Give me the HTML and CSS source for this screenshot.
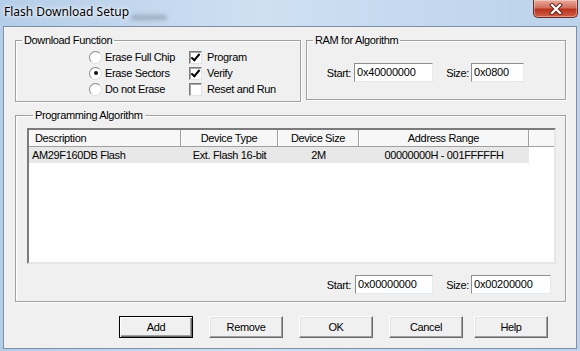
FILE: index.html
```html
<!DOCTYPE html>
<html lang="en">
<head>
  <meta charset="UTF-8">
  <title>Flash Download Setup</title>
  <link rel="stylesheet" href="styles.css">
</head>
<body>

  <div class="window">
    <!-- Title bar -->
    <div class="titlebar">
      <span class="title">Flash Download Setup</span>
      <span class="glass-smudge"></span>
      <button class="close" title="Close">
        <svg width="16" height="12" viewBox="0 0 16 12">
          <path d="M4 2 L12 10 M12 2 L4 10" stroke="#5a1f18" stroke-width="4" stroke-linecap="square"/>
          <path d="M4 2 L12 10 M12 2 L4 10" stroke="#ffffff" stroke-width="2.2" stroke-linecap="square"/>
        </svg>
      </button>
    </div>

    <div class="client">
      <div class="top-row">
        <fieldset class="group group-func">
          <legend>Download Function</legend>
          <div class="func-grid">
            <label class="opt"><span class="radio"></span>Erase Full Chip</label>
            <label class="opt"><span class="check on"></span>Program</label>
            <label class="opt"><span class="radio on"></span>Erase Sectors</label>
            <label class="opt"><span class="check on"></span>Verify</label>
            <label class="opt"><span class="radio"></span>Do not Erase</label>
            <label class="opt"><span class="check"></span>Reset and Run</label>
          </div>
        </fieldset>

        <fieldset class="group group-ram">
          <legend>RAM for Algorithm</legend>
          <div class="field-row">
            <span class="lbl lbl-start">Start:</span>
            <span class="textbox tb-ram-start">0x40000000</span>
            <span class="lbl lbl-size">Size:</span>
            <span class="textbox tb-ram-size">0x0800</span>
          </div>
        </fieldset>
      </div>

      <fieldset class="group group-algo">
        <legend>Programming Algorithm</legend>
        <div class="list">
          <div class="list-head">
            <div class="cell col-desc">Description</div>
            <div class="cell col-type">Device Type</div>
            <div class="cell col-size">Device Size</div>
            <div class="cell col-addr">Address Range</div>
            <div class="cell col-rest"></div>
          </div>
          <div class="list-row selected">
            <div class="cell col-desc">AM29F160DB Flash</div>
            <div class="cell col-type">Ext. Flash 16-bit</div>
            <div class="cell col-size">2M</div>
            <div class="cell col-addr">00000000H - 001FFFFFH</div>
          </div>
        </div>
        <div class="field-row addr-row">
          <span class="lbl lbl-start2">Start:</span>
          <span class="textbox tb-algo-start">0x00000000</span>
          <span class="lbl lbl-size2">Size:</span>
          <span class="textbox tb-algo-size">0x00200000</span>
        </div>
      </fieldset>

      <div class="buttons">
        <button class="btn default">Add</button>
        <button class="btn">Remove</button>
        <button class="btn">OK</button>
        <button class="btn">Cancel</button>
        <button class="btn btn-help">Help</button>
      </div>
    </div>
  </div>

</body>
</html>
```

FILE: styles.css
```css
* {
  box-sizing: border-box;
}

body {
  margin: 0;
  font-family: 'Liberation Sans', Arial, sans-serif;
  font-size: 11px;
  letter-spacing: -0.35px;
  color: #000;
}

.window {
  width: 580px;
  height: 351px;
  display: flex;
  flex-direction: column;
  padding: 0 3px 2px 3px;
  background: linear-gradient(to right, #b4cde8, #cfe0f2 45%, #c3d8ee 75%, #bcd3eb);
}

/* Title bar */
.titlebar {
  height: 26px;
  margin: 0 -3px;
  padding-left: 4px;
  display: flex;
  align-items: flex-start;
}

.title {
  font-family: 'Noto Sans', 'Open Sans', sans-serif;
  font-size: 12px;
  letter-spacing: 0;
  line-height: 16px;
  padding-top: 4px;
  color: #000;
  text-shadow: 0 0 6px #fff, 0 0 3px #fff;
}

.glass-smudge {
  width: 36px;
  height: 5px;
  margin: 15px 0 0 2px;
  background: #8b9aab;
  border-radius: 3px;
  filter: blur(2px);
  opacity: 0.7;
}

.close {
  margin-left: auto;
  margin-right: 2px;
  width: 45px;
  height: 18px;
  padding: 0;
  border: 1px solid #6e2b22;
  border-top: none;
  border-radius: 0 0 5px 5px;
  background: linear-gradient(to bottom, #e9a99b, #d2705e 45%, #b8321c 55%, #d0604a);
  box-shadow: inset 0 0 0 1px rgba(255, 255, 255, 0.35);
  display: flex;
  justify-content: center;
  align-items: center;
}

/* Client area */
.client {
  flex: 1;
  background: #f0f0f0;
  border: 1px solid #7d90a6;
  padding: 7px 10px 0 11px;
}

.top-row {
  display: flex;
  align-items: flex-start;
  gap: 5px;
}

.group {
  margin: 0;
  padding: 0;
  min-width: 0;
  border: 1px solid #a0a0a0;
  box-shadow: inset 1px 1px 0 #fff, 1px 1px 0 #fff;
}

.group legend {
  margin-left: 6px;
  padding: 0 2px;
  line-height: 13px;
}

.group-func {
  width: 286px;
  height: 68px;
}

.group-ram {
  width: 260px;
  height: 66px;
}

.func-grid {
  margin: 2px 0 0 73px;
  display: grid;
  grid-template-columns: 100px auto;
}

.opt {
  height: 16px;
  display: flex;
  align-items: center;
}

.radio {
  width: 13px;
  height: 13px;
  margin-right: 3px;
  border-radius: 50%;
  border: 1px solid;
  border-color: #8a8a8a #dedede #dedede #8a8a8a;
  background: #fff;
  display: flex;
  justify-content: center;
  align-items: center;
}

.radio.on::after {
  content: "";
  width: 4px;
  height: 4px;
  border-radius: 50%;
  background: #111;
}

.check {
  width: 13px;
  height: 13px;
  margin-right: 5px;
  border: 1px solid;
  border-color: #7a7a7a #e3e3e3 #e3e3e3 #7a7a7a;
  box-shadow: inset 1px 1px 0 #a8a8a8;
  background: #fff;
  position: relative;
}

.check.on::after {
  content: "";
  position: absolute;
  left: 3px;
  top: 0px;
  width: 3px;
  height: 7px;
  border: solid #000;
  border-width: 0 2px 2px 0;
  transform: rotate(40deg);
}

/* Text fields */
.field-row {
  display: flex;
  align-items: center;
  padding-top: 16px;
}

.lbl {
  text-align: right;
}

.lbl-start {
  width: 47px;
  padding-right: 3px;
}

.lbl-size {
  width: 38px;
  padding-right: 2px;
}

.textbox {
  height: 19px;
  line-height: 17px;
  padding-left: 2px;
  background: #fff;
  border: 1px solid;
  border-color: #8e8f8f #e3e9ef #e3e9ef #8e8f8f;
  letter-spacing: -0.2px;
}

.tb-ram-start {
  width: 79px;
}

.tb-ram-size {
  width: 53px;
}

/* Programming algorithm */
.group-algo {
  width: 551px;
  height: 193px;
  margin-top: 7px;
  padding: 6px 9px 0 11px;
}

.list {
  height: 136px;
  background: #fff;
  border: 2px solid;
  border-color: #7b7b7b #e6e6e6 #e6e6e6 #7b7b7b;
}

.list-head,
.list-row {
  display: flex;
}

.list-head {
  height: 17px;
  background: #f7f7f7;
  border-bottom: 1px solid #a0a0a0;
}

.list-head .cell {
  line-height: 16px;
  text-align: center;
  border-right: 1px solid #a0a0a0;
  box-shadow: inset 1px 0 0 #fff;
}

.list-row {
  height: 16px;
  line-height: 16px;
}

.list-row .cell {
  text-align: center;
  background: #e8e8e8;
}

.list-head .col-desc {
  text-align: left;
  padding-left: 6px;
}

.list-row .col-desc {
  text-align: left;
  padding-left: 3px;
}

.col-desc { width: 152px; }
.col-type { width: 97px; }
.col-size { width: 81px; }
.col-addr { width: 170px; }
.col-rest { flex: 1; border-right: none !important; }

.addr-row {
  padding-top: 0;
  margin-top: 11px;
  justify-content: flex-end;
  margin-right: 5px;
}

.lbl-start2 {
  width: 40px;
  padding-right: 4px;
}

.lbl-size2 {
  width: 38px;
  padding-right: 2px;
}

.tb-algo-start {
  width: 78px;
}

.tb-algo-size {
  width: 80px;
}

/* Buttons */
.buttons {
  display: flex;
  gap: 16px;
  margin-top: 14px;
  padding-left: 104px;
}

.btn {
  width: 74px;
  height: 22px;
  padding: 0;
  font-family: inherit;
  font-size: 11px;
  letter-spacing: -0.35px;
  color: #000;
  background: #f0f0f0;
  border: 1px solid;
  border-color: #fff #696969 #696969 #fff;
  box-shadow: inset -1px -1px 0 #a0a0a0, inset 1px 1px 0 #e3e3e3;
}

.btn-help {
  margin-left: -5px;
}

.btn.default {
  border: 1px solid #000;
  box-shadow: inset 1px 1px 0 #fff, inset -1px -1px 0 #696969, inset -2px -2px 0 #a0a0a0;
}
```
